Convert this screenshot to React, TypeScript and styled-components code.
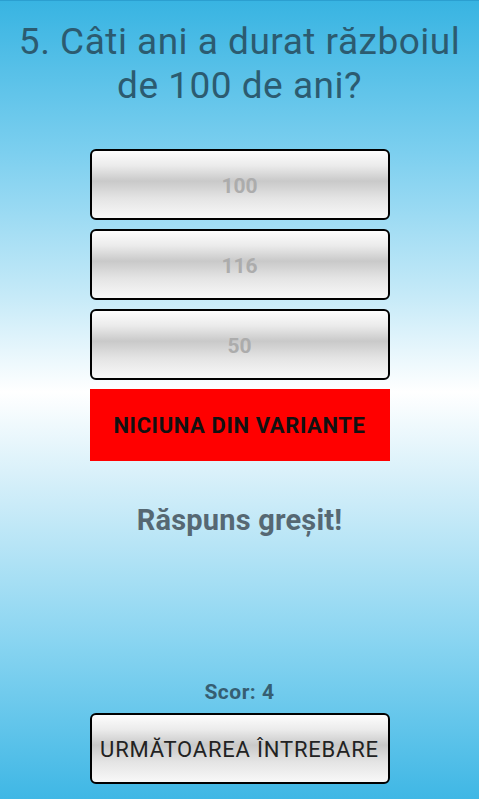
import React from "react";
import styled, { createGlobalStyle } from "styled-components";

const Global = createGlobalStyle`
  html, body { margin: 0; padding: 0; }
  body { font-family: Roboto, "Noto Sans", sans-serif; }
`;

const Screen = styled.div`
  box-sizing: border-box;
  width: 479px;
  height: 799px;
  border-top: 1px solid #2b9fd0;
  background: linear-gradient(
    to bottom,
    #38b4e2 0%,
    #7ccfef 19%,
    #c6eaf8 37%,
    #ffffff 49%,
    #d2eef9 61%,
    #8ad5f1 80%,
    #3fb7e5 100%
  );
  display: flex;
  flex-direction: column;
  align-items: center;
  overflow: hidden;
`;

const Title = styled.h1`
  margin: 19px 0 0;
  font-size: 37px;
  line-height: 44px;
  letter-spacing: 0.5px;
  font-weight: 400;
  color: #2c5b70;
  text-align: center;
`;

const Answers = styled.div`
  margin-top: 41px;
  display: flex;
  flex-direction: column;
  gap: 9px;
  width: 300px;
`;

const GlossButton = styled.button<{ $dim?: boolean }>`
  box-sizing: border-box;
  width: 300px;
  height: 71px;
  border: 2px solid #000;
  border-radius: 6px;
  background: linear-gradient(
    to bottom,
    #fdfdfd 0%,
    #ebebeb 22%,
    #c9c9c9 45%,
    #e4e4e4 70%,
    #f8f8f8 100%
  );
  font-family: Roboto, "Noto Sans", sans-serif;
  font-size: ${(p) => (p.$dim ? "21px" : "22px")};
  font-weight: ${(p) => (p.$dim ? 700 : 400)};
  letter-spacing: ${(p) => (p.$dim ? "0" : "0.8px")};
  color: ${(p) => (p.$dim ? "#acacac" : "#222222")};
  display: flex;
  align-items: center;
  justify-content: center;
  padding: 2px 0 0;
`;

const WrongChoice = styled.div`
  box-sizing: border-box;
  width: 300px;
  height: 72px;
  background: #ff0000;
  color: #111;
  font-size: 22px;
  letter-spacing: 0.6px;
  font-weight: 700;
  display: flex;
  align-items: center;
  justify-content: center;
`;

const Verdict = styled.div`
  margin-top: 42px;
  font-size: 29px;
  letter-spacing: 0.2px;
  font-weight: 700;
  color: #566873;
`;

const Spacer = styled.div`
  flex: 1;
`;

const Score = styled.div`
  font-size: 21px;
  letter-spacing: 0.5px;
  font-weight: 700;
  color: #365e72;
  margin-bottom: 9px;
`;

const Footer = styled.div`
  margin-bottom: 15px;
`;

export default function App() {
  return (
    <>
      <Global />
      <Screen>
        <Title>
          5. Câti ani a durat războiul
          <br />
          de 100 de ani?
        </Title>
        <Answers>
          <GlossButton $dim>100</GlossButton>
          <GlossButton $dim>116</GlossButton>
          <GlossButton $dim>50</GlossButton>
          <WrongChoice>NICIUNA DIN VARIANTE</WrongChoice>
        </Answers>
        <Verdict>Răspuns greșit!</Verdict>
        <Spacer />
        <Score>Scor: 4</Score>
        <Footer>
          <GlossButton>URMĂTOAREA ÎNTREBARE</GlossButton>
        </Footer>
      </Screen>
    </>
  );
}
